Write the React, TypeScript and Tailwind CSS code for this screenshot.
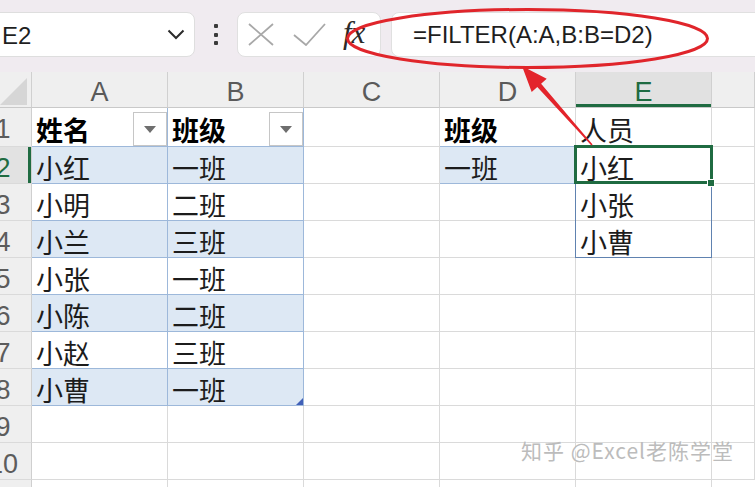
import React from "react";

const cols = "grid grid-cols-[32px_136px_136px_136px_136px_136px_43px]";
const gridLine = "border-r border-b border-r-[#dadada] border-b-[#dadada]";
const tableLine = "border-r border-b border-r-[#9db8da] border-b-[#9db8da]";
const tableBottom = "border-r border-b border-r-[#dadada] border-b-[#9db8da]";
const band = "bg-[#dde8f4]";

type CellProps = {
  cls: string;
  text?: string;
  bold?: boolean;
  mb?: string;
  children?: React.ReactNode;
};

function Cell({ cls, text, bold, mb = "mb-[2px]", children }: CellProps) {
  return (
    <div className={`relative flex items-end min-w-0 ${cls}`}>
      {text && (
        <span
          className={`ml-[4px] ${mb} leading-none text-[27px] whitespace-nowrap font-['Noto_Sans_CJK_SC',sans-serif] ${
            bold ? "font-bold text-black" : "text-[#1c1c1c]"
          }`}
        >
          {text}
        </span>
      )}
      {children}
    </div>
  );
}

function RowHead({ n, active, mb = "mb-[1px]" }: { n: number; active?: boolean; mb?: string }) {
  return (
    <div
      className={`overflow-hidden flex items-end border-r border-b border-r-[#cfcfcf] border-b-[#dadada] ${
        active ? "bg-[#e2e2e2] shadow-[inset_-3px_0_0_#1f6b41]" : "bg-[#efefef]"
      }`}
    >
      <div
        className={`w-[40px] -ml-[17px] shrink-0 text-center leading-none text-[27px] ${mb} ${
          active ? "text-[#1f6b41]" : "text-[#5c5c5c]"
        }`}
      >
        {n}
      </div>
    </div>
  );
}

function FilterButton() {
  return (
    <div className="ml-auto w-[34px] h-[34px] shrink-0 bg-white border border-[#c6c6c6] flex items-center justify-center">
      <svg width="12" height="7" viewBox="0 0 12 7">
        <path d="M0 0 L12 0 L6 7 Z" fill="#6e6e6e" />
      </svg>
    </div>
  );
}

function ColHead({ label, active }: { label?: string; active?: boolean }) {
  return (
    <div
      className={`flex items-end justify-center border-r border-b border-r-[#d0d0d0] border-b-[#c9c9c9] ${
        active ? "bg-[#e1e1e1] shadow-[inset_0_-3px_0_#1f6b41] text-[#1f6b41]" : "bg-[#efefef] text-[#5a5a5a]"
      }`}
    >
      {label && <span className="leading-none text-[27px] mb-[1px]">{label}</span>}
    </div>
  );
}

function Toolbar() {
  return (
    <div className="h-[72px] bg-[#f0ebf0] flex items-start pt-[12px] overflow-hidden">
      <div className="-ml-[8px] w-[203px] h-[45px] shrink-0 rounded-[8px] border border-[#dedede] bg-white flex items-center justify-between pl-[9px] pr-[9px]">
        <span className="text-[24px] leading-none text-[#1f1f1f] mt-[3px]">E2</span>
        <svg width="18" height="11" viewBox="0 0 18 11">
          <path d="M1.5 1.5 L9 9 L16.5 1.5" fill="none" stroke="#2b2b2b" strokeWidth="2" />
        </svg>
      </div>
      <div className="ml-[19px] h-[45px] w-[4px] shrink-0 flex flex-col justify-center gap-[4.5px]">
        <div className="w-[4px] h-[4px] rounded-[1px] bg-[#3a3a3a]" />
        <div className="w-[4px] h-[4px] rounded-[1px] bg-[#3a3a3a]" />
        <div className="w-[4px] h-[4px] rounded-[1px] bg-[#3a3a3a]" />
      </div>
      <div className="ml-[19px] w-[144px] h-[45px] shrink-0 rounded-[8px] border border-[#e0e0e0] bg-white flex items-center pl-[10px]">
        <svg width="26" height="23" viewBox="0 0 26 23">
          <path d="M1 1 L25 22 M25 1 L1 22" stroke="#a8a8a8" strokeWidth="1.8" fill="none" />
        </svg>
        <svg className="ml-[19px]" width="33" height="23" viewBox="0 0 33 23">
          <path d="M1 12 L13 22 L32 1" stroke="#a8a8a8" strokeWidth="1.8" fill="none" />
        </svg>
        <span className="ml-[17px] italic text-[31px] leading-none text-[#2a2a2a] font-['Liberation_Serif',serif] -mt-[4px]">
          fx
        </span>
      </div>
      <div className="ml-[10px] w-[400px] h-[45px] shrink-0 rounded-[8px] border border-[#e0e0e0] bg-white flex items-center pl-[21px]">
        <span className="text-[24px] leading-none text-[#1e1e1e] whitespace-nowrap">=FILTER(A:A,B:B=D2)</span>
      </div>
    </div>
  );
}

const names = ["小红", "小明", "小兰", "小张", "小陈", "小赵", "小曹"];
const groups = ["一班", "二班", "三班", "一班", "二班", "三班", "一班"];
const spill: Record<number, string> = { 2: "小红", 3: "小张", 4: "小曹" };

function Sheet() {
  return (
    <div>
      <div className={`${cols} h-[36px]`}>
        <div className="bg-[#efefef] border-r border-b border-r-[#d0d0d0] border-b-[#c9c9c9] relative">
          <svg className="absolute left-0 top-[5px]" width="28" height="28" viewBox="0 0 28 28">
            <path d="M0 28 L27 28 L27 1 Z" fill="#d6d6d6" />
          </svg>
        </div>
        <ColHead label="A" />
        <ColHead label="B" />
        <ColHead label="C" />
        <ColHead label="D" />
        <ColHead label="E" active />
        <ColHead />
      </div>

      <div className={`${cols} h-[39px]`}>
        <RowHead n={1} mb="mb-[3px]" />
        <Cell cls={tableLine} text="姓名" bold mb="mb-[3px]">
          <FilterButton />
        </Cell>
        <Cell cls={tableLine} text="班级" bold mb="mb-[3px]">
          <FilterButton />
        </Cell>
        <Cell cls={gridLine} />
        <Cell cls={tableBottom} text="班级" bold mb="mb-[3px]" />
        <Cell cls={gridLine} text="人员" mb="mb-[3px]" />
        <Cell cls={gridLine} />
      </div>

      {names.map((name, i) => {
        const r = i + 2;
        const shaded = r % 2 === 0;
        return (
          <div key={r} className={`${cols} h-[37px]`}>
            <RowHead n={r} active={r === 2} />
            <Cell cls={`${tableLine} ${shaded ? band : "bg-white"}`} text={name} />
            <Cell cls={`${tableLine} ${shaded ? band : "bg-white"}`} text={groups[i]}>
              {r === 8 && (
                <svg className="absolute right-0 bottom-0" width="7" height="7" viewBox="0 0 7 7">
                  <path d="M7 0 L7 7 L0 7 Z" fill="#4160b8" />
                </svg>
              )}
            </Cell>
            <Cell cls={gridLine} />
            {r === 2 ? <Cell cls={`${tableBottom} ${band}`} text="一班" /> : <Cell cls={gridLine} />}
            <Cell cls={gridLine} text={spill[r]} />
            <Cell cls={gridLine} />
          </div>
        );
      })}

      {[9, 10].map((r) => (
        <div key={r} className={`${cols} h-[37px]`}>
          <RowHead n={r} />
          <Cell cls={gridLine} />
          <Cell cls={gridLine} />
          <Cell cls={gridLine} />
          <Cell cls={gridLine} />
          <Cell cls={gridLine} />
          <Cell cls={gridLine} />
        </div>
      ))}

      <div className={`${cols} h-[8px]`}>
        <div className="bg-[#efefef] border-r border-r-[#cfcfcf]" />
        <div className="border-r border-r-[#dadada]" />
        <div className="border-r border-r-[#dadada]" />
        <div className="border-r border-r-[#dadada]" />
        <div className="border-r border-r-[#dadada]" />
        <div className="border-r border-r-[#dadada]" />
        <div />
      </div>
    </div>
  );
}

export default function App() {
  return (
    <div className="relative w-[755px] h-[487px] overflow-hidden bg-white font-['Liberation_Sans',sans-serif]">
      <Toolbar />
      <Sheet />

      {/* spill range outline */}
      <div className="absolute left-[575px] top-[146px] w-[137px] h-[112px] border border-[#6082b0] pointer-events-none" />
      {/* active cell */}
      <div className="absolute left-[574px] top-[145px] w-[139px] h-[39px] border-[3px] border-[#1f6b41] pointer-events-none" />
      <div className="absolute left-[707px] top-[179px] w-[8px] h-[8px] bg-[#1f6b41] border border-white pointer-events-none" />

      {/* red callout */}
      <svg className="absolute left-0 top-0 pointer-events-none" width="755" height="487" viewBox="0 0 755 487">
        <ellipse cx="527.5" cy="38.5" rx="180" ry="29" fill="none" stroke="#e0252b" strokeWidth="3" />
        <polygon
          points="522,66 531.7,92 537.3,87.1 591.4,145.5 592.6,144.5 541.1,83.7 546.7,78.8"
          fill="#e3242b"
        />
      </svg>

      <div className="absolute left-[521px] top-[440px] text-[21px] leading-none tracking-[1px] text-[#bcbcbc] whitespace-nowrap font-['Noto_Sans_CJK_SC',sans-serif] [text-shadow:1px_1px_0_#ffffff] pointer-events-none">
        知乎 @Excel老陈学堂
      </div>
    </div>
  );
}
